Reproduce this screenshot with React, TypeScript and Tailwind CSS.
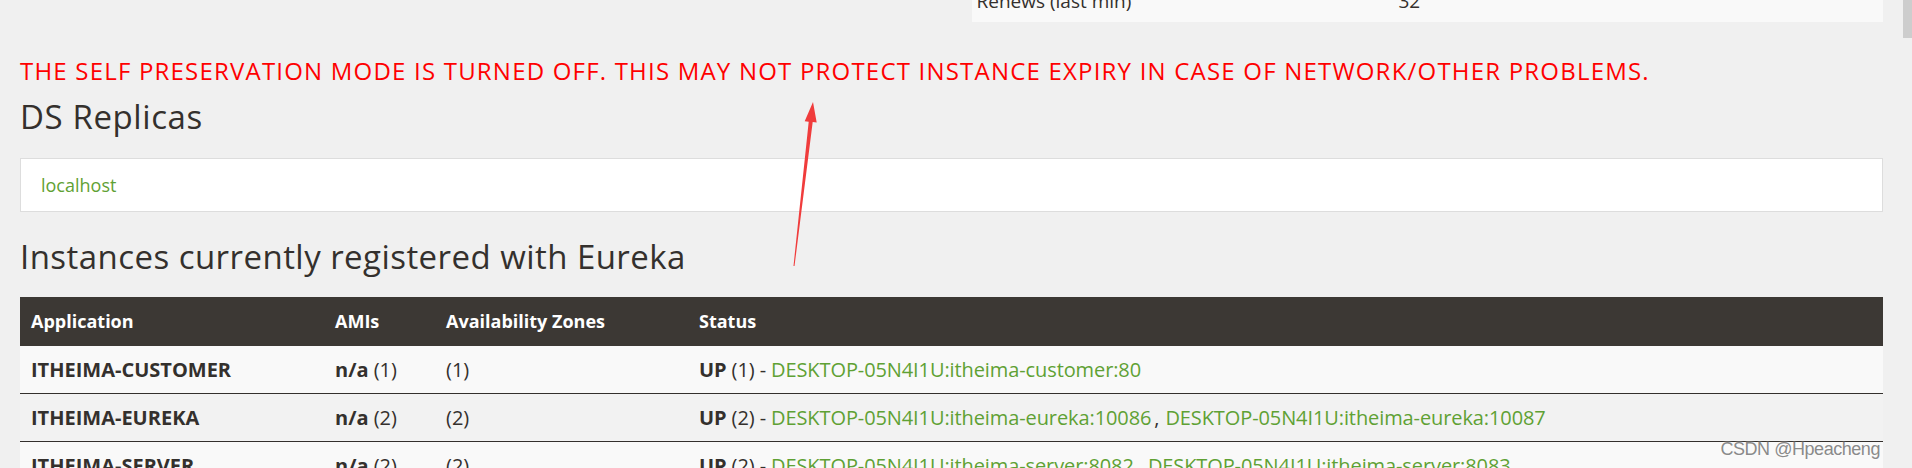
import React from "react";

const rows = [
  {
    app: "ITHEIMA-CUSTOMER",
    n: "(1)",
    links: ["DESKTOP-05N4I1U:itheima-customer:80"],
    bg: "bg-[#f9f9f9]",
  },
  {
    app: "ITHEIMA-EUREKA",
    n: "(2)",
    links: ["DESKTOP-05N4I1U:itheima-eureka:10086", "DESKTOP-05N4I1U:itheima-eureka:10087"],
    bg: "bg-[#f2f2f2]",
  },
  {
    app: "ITHEIMA-SERVER",
    n: "(2)",
    links: ["DESKTOP-05N4I1U:itheima-server:8082", "DESKTOP-05N4I1U:itheima-server:8083"],
    bg: "bg-[#f9f9f9]",
  },
];

export default function App() {
  return (
    <div
      className="relative flex h-[468px] w-full overflow-hidden bg-[#f0f0f0] text-[#34302d]"
      style={{ fontFamily: '"Open Sans", "Noto Sans", sans-serif' }}
    >
      <div className="flex-1 px-[20px]">
        {/* top fragment of the instance info table */}
        <div className="grid grid-cols-2">
          <div />
          <div className="ml-[20px] h-[22px] overflow-hidden bg-[#f9f9f9]">
            <div className="-mt-[12px] flex text-[19px] leading-[26px]">
              <span className="w-[427px] pl-[5px]">Renews (last min)</span>
              <span>32</span>
            </div>
          </div>
        </div>

        <div className="mt-[35px] text-[24px] leading-[28px] font-medium tracking-[1.2px] text-[#ff0000]">
          THE SELF PRESERVATION MODE IS TURNED OFF. THIS MAY NOT PROTECT INSTANCE EXPIRY IN CASE OF NETWORK/OTHER PROBLEMS.
        </div>

        <h3 className="mt-[14px] text-[33px] leading-[36px] font-medium tracking-[0.6px]">DS Replicas</h3>

        <div className="mt-[23px] flex h-[54px] items-center border border-[#dddddd] bg-white pl-[20px]">
          <span className="text-[18px] text-[#5fa134]">localhost</span>
        </div>

        <h3 className="mt-[27px] text-[33px] leading-[36px] font-medium tracking-[0.45px]">
          Instances currently registered with Eureka
        </h3>

        <div className="mt-[22px]">
          <div className="grid h-[49px] grid-cols-[304px_111px_253px_1fr] items-center bg-[#3c3834] text-[18px] font-bold text-white">
            <div className="pl-[11px]">Application</div>
            <div className="pl-[11px]">AMIs</div>
            <div className="pl-[11px]">Availability Zones</div>
            <div className="pl-[11px]">Status</div>
          </div>
          {rows.map((r) => (
            <div
              key={r.app}
              className={`grid h-[48px] grid-cols-[304px_111px_253px_1fr] items-center border-b border-[#34302d] text-[20px] ${r.bg}`}
            >
              <div className="pl-[11px] font-bold">{r.app}</div>
              <div className="pl-[11px]">
                <b>n/a</b> {r.n}
              </div>
              <div className="pl-[11px]">{r.n}</div>
              <div className="whitespace-nowrap pl-[11px] tracking-[-0.1px]">
                <b>UP</b> {r.n} -{" "}
                {r.links.map((l, i) => (
                  <React.Fragment key={l}>
                    {i > 0 && <span className="ml-[3px] mr-[6px]">,</span>}
                    <span className="text-[#5fa134]">{l}</span>
                  </React.Fragment>
                ))}
              </div>
            </div>
          ))}
        </div>
      </div>

      {/* scrollbar */}
      <div className="w-[9px] bg-[#f0f0f0]">
        <div className="h-[38px] bg-[#cdcdcd]" />
      </div>

      {/* red annotation arrow */}
      <svg className="pointer-events-none absolute left-0 top-0" width="1912" height="468">
        <polygon
          points="813,102 816.7,122.6 812.7,122.1 794.5,266 793.5,266 808.7,121.7 804.7,121.2"
          fill="#f03c3c"
        />
      </svg>

      {/* watermark */}
      <div
        className="absolute right-[32px] top-[436px] text-[18px] tracking-tight text-[#8a8a8a]"
        style={{ fontFamily: '"Liberation Sans", sans-serif', textShadow: "0 0 2px #ffffff" }}
      >
        CSDN @Hpeacheng
      </div>
    </div>
  );
}
